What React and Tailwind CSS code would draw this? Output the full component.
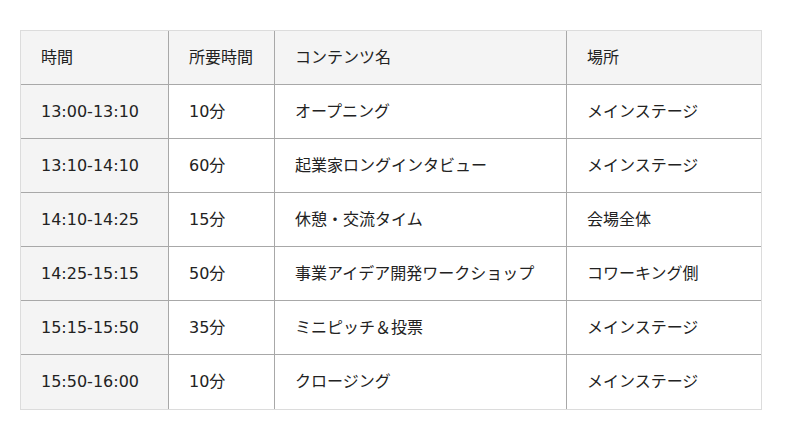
import React from 'react';

const rows = [
  ['13:00-13:10', '10分', 'オープニング', 'メインステージ'],
  ['13:10-14:10', '60分', '起業家ロングインタビュー', 'メインステージ'],
  ['14:10-14:25', '15分', '休憩・交流タイム', '会場全体'],
  ['14:25-15:15', '50分', '事業アイデア開発ワークショップ', 'コワーキング側'],
  ['15:15-15:50', '35分', 'ミニピッチ＆投票', 'メインステージ'],
  ['15:50-16:00', '10分', 'クロージング', 'メインステージ'],
];

const widths = ['w-[148px]', 'w-[106px]', 'w-[292px]', 'w-[194px]'];

const App = () => {
  const font = { fontFamily: '"DejaVu Sans", "Noto Sans CJK JP", sans-serif' };

  const cellClass = (ci, last) =>
    `h-[54px] px-5 text-left align-middle font-normal text-[16px] text-[#222] border-[#a8a8a8] ${
      ci < 3 ? 'border-r' : ''
    } ${last ? '' : 'border-b'} ${widths[ci]}`;

  return (
    <div className="min-h-screen bg-white pt-[30px] pl-[20px]" style={font}>
      <table className="table-fixed w-[742px] border-separate border-spacing-0 border border-[#dcdcdc]">
        <thead>
          <tr className="bg-[#f4f4f4]">
            {['時間', '所要時間', 'コンテンツ名', '場所'].map((h, ci) => (
              <th key={h} className={cellClass(ci, false) + ' h-[53px]'}>
                {h}
              </th>
            ))}
          </tr>
        </thead>
        <tbody>
          {rows.map((r, ri) => (
            <tr key={ri}>
              {r.map((c, ci) => (
                <td
                  key={ci}
                  className={`${cellClass(ci, ri === rows.length - 1)} ${ci === 0 ? 'bg-[#f4f4f4]' : 'bg-white'} ${
                    ri === rows.length - 1 ? 'h-[53px]' : ''
                  }`}
                >
                  {c}
                </td>
              ))}
            </tr>
          ))}
        </tbody>
      </table>
    </div>
  );
};

export default App;
